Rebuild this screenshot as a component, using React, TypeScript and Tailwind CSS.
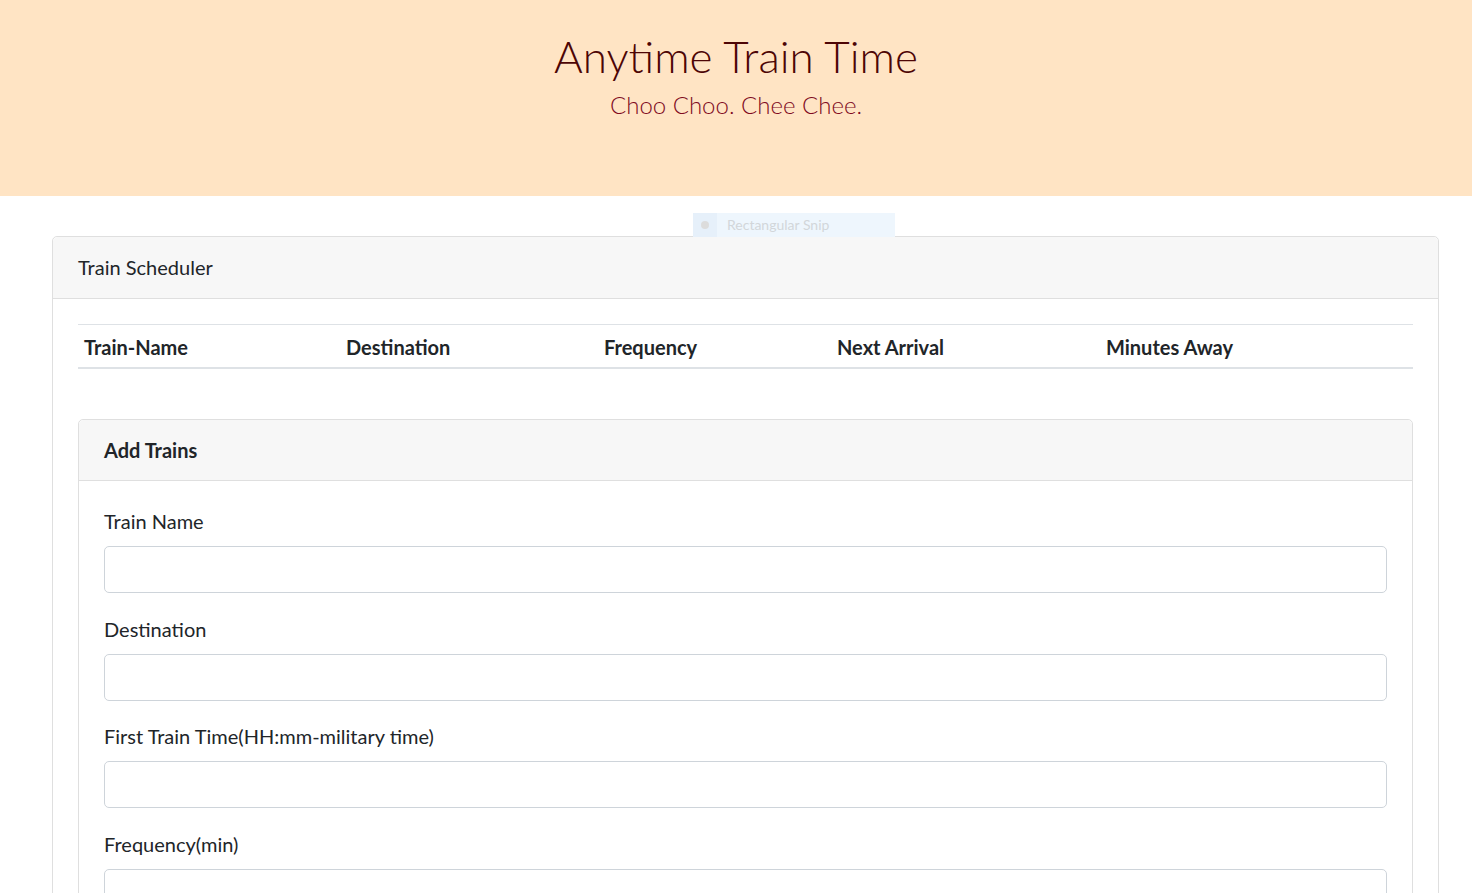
import React from 'react';

const fields = [
  { id: 'train-name', label: 'Train Name' },
  { id: 'destination', label: 'Destination' },
  { id: 'first-train', label: 'First Train Time(HH:mm-military time)' },
  { id: 'frequency', label: 'Frequency(min)' }
];

const columns = [
  { title: 'Train-Name', width: 'w-[262px]' },
  { title: 'Destination', width: 'w-[258px]' },
  { title: 'Frequency', width: 'w-[233px]' },
  { title: 'Next Arrival', width: 'w-[269px]' },
  { title: 'Minutes Away', width: 'flex-1' }
];

const App = () => {
  return (
    <div className="min-h-screen bg-white text-[#212529] font-['Lato','Liberation_Sans',sans-serif] text-[20px] leading-[30px]">
      {/* Jumbotron */}
      <header className="h-[196px] bg-[#ffe4c4] flex flex-col items-center pt-[29px]">
        <h1 className="text-[44px] leading-[54px] font-light text-[#4d0505]">Anytime Train Time</h1>
        <p className="mt-[5px] text-[24px] leading-[34px] font-light text-[#800a1e]">Choo Choo. Chee Chee.</p>
      </header>

      <main className="relative pt-[40px] pl-[52px]">
        {/* snipping tool leftover */}
        <div className="absolute left-[693px] top-[17px] w-[202px] h-[24px] bg-[#eef6fd] flex items-center text-[14px] leading-[20px] text-[#d2d6da]">
          <div className="w-[24px] h-full bg-[#e6f0fa] flex items-center justify-center">
            <span className="w-[8px] h-[8px] rounded-full bg-[#dcdcdc]"></span>
          </div>
          <span className="ml-[10px]">Rectangular Snip</span>
        </div>

        <section className="w-[1387px] border border-[#dfdfdf] rounded-[5px] bg-white">
          <div className="px-[25px] pt-[15px] pb-[16px] bg-[#f7f7f7] border-b border-[#dfdfdf] rounded-t-[5px]">
            Train Scheduler
          </div>
          <div className="p-[25px]">
            {/* Schedule table */}
            <div className="flex border-t border-[#dee2e6] border-b-2 font-bold">
              {columns.map((col) => (
                <div key={col.title} className={`${col.width} px-[6px] pt-[7px] pb-[5px]`}>
                  {col.title}
                </div>
              ))}
            </div>

            {/* Add trains */}
            <div className="mt-[50px] border border-[#dfdfdf] rounded-[5px]">
              <div className="px-[25px] pt-[15px] pb-[15px] bg-[#f7f7f7] border-b border-[#dfdfdf] rounded-t-[5px] font-bold">
                Add Trains
              </div>
              <form className="p-[25px]">
                {fields.map((field) => (
                  <div key={field.id} className="mb-[20.6px]">
                    <label htmlFor={field.id} className="block mb-[10px]">
                      {field.label}
                    </label>
                    <input
                      id={field.id}
                      type="text"
                      className="block w-full h-[47px] px-[15px] border border-[#ced4da] rounded-[5px] bg-white"
                    />
                  </div>
                ))}
                <button type="button" className="px-[15px] py-[7px] rounded-[5px] bg-[#007bff] text-white">
                  Submit
                </button>
              </form>
            </div>
          </div>
        </section>
      </main>
    </div>
  );
};

export default App;
